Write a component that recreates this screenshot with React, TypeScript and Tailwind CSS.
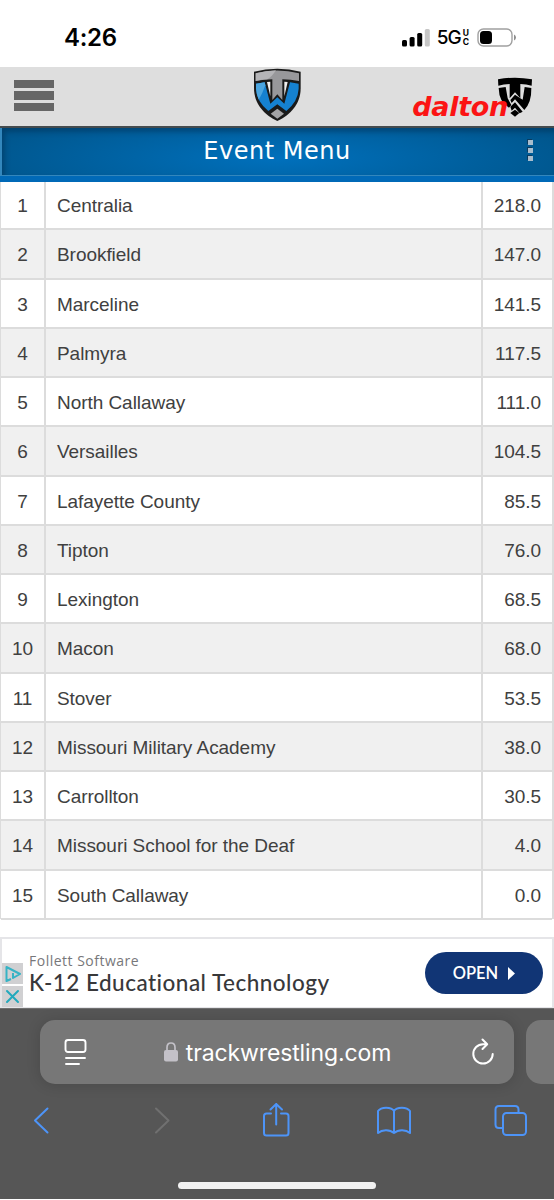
import type { ReactNode } from 'react'

type Team = { name: string; score: string }

const TEAMS: Team[] = [
  { name: 'Centralia', score: '218.0' },
  { name: 'Brookfield', score: '147.0' },
  { name: 'Marceline', score: '141.5' },
  { name: 'Palmyra', score: '117.5' },
  { name: 'North Callaway', score: '111.0' },
  { name: 'Versailles', score: '104.5' },
  { name: 'Lafayette County', score: '85.5' },
  { name: 'Tipton', score: '76.0' },
  { name: 'Lexington', score: '68.5' },
  { name: 'Macon', score: '68.0' },
  { name: 'Stover', score: '53.5' },
  { name: 'Missouri Military Academy', score: '38.0' },
  { name: 'Carrollton', score: '30.5' },
  { name: 'Missouri School for the Deaf', score: '4.0' },
  { name: 'South Callaway', score: '0.0' },
]

function StatusBar() {
  return (
    <div className="flex h-[67px] items-start justify-between bg-white pl-16 pr-[37px] pt-[23px] text-black">
      <span className="font-[Inter,sans-serif] text-[24px] font-semibold leading-[29px] tracking-[-0.3px]">4:26</span>
      <div className="flex h-[29px] items-center">
        <svg className="mr-[7px]" width="28" height="18" viewBox="0 0 28 18">
          <rect x="0" y="11" width="5" height="6.5" rx="1.5" />
          <rect x="7.6" y="8" width="5" height="9.5" rx="1.5" />
          <rect x="15.2" y="4" width="5" height="13.5" rx="1.5" />
          <rect x="22.8" y="0" width="5" height="17.5" rx="1.5" fill="#c6c6c6" />
        </svg>
        <span className="font-[Inter,sans-serif] text-[19px] font-medium leading-none tracking-[-1px]">5G</span>
        <span className="ml-[2px] flex flex-col font-[Inter,sans-serif] text-[8.5px] font-bold leading-[9px]">
          <span>U</span>
          <span>C</span>
        </span>
        <svg className="ml-[8px]" width="40" height="19" viewBox="0 0 40 19">
          <rect x="1" y="1" width="34" height="17" rx="5.5" fill="none" stroke="#a0a0a0" strokeWidth="1.4" />
          <rect x="3" y="3" width="12" height="13" rx="3.5" />
          <path d="M37 6.5q2 1 2 3t-2 3z" fill="#8e8e8e" />
        </svg>
      </div>
    </div>
  )
}

function ShieldLogo() {
  return (
    <svg width="49" height="54" viewBox="39 24 147 162">
      <path d="M42 35Q76 26 112 26T182 35V84C182 132 152 164 112 183C72 164 42 132 42 84Z" fill="#1a1a1a" />
      <path d="M47 40Q112 23 177 40V63Q152 59 127 58V120L112 103L97 120V58Q72 59 47 63Z" fill="#98989b" />
      <path d="M47 40Q76 32 108 31Q96 50 82 58Q64 59 47 63Z" fill="#b4b4b7" />
      <path d="M81 66L91 65V109ZM133 65L143 66L133 109Z" fill="#eee" />
      <path d="M48 71L74 67L91 131L112 112L133 131L150 67L176 71V86Q174 124 139 153L112 133L85 153Q50 124 48 86Z" fill="#1581d0" />
      <path d="M48 71L74 67L76 76Q68 100 56 119Q49 102 48 86Z" fill="#4ba5df" />
      <path d="M112 146L132 161L112 176L92 161Z" fill="#a3a3a5" />
    </svg>
  )
}

function SponsorMark() {
  return (
    <svg width="36" height="40" viewBox="0 0 108 120">
      <path d="M3 7Q54-3 105 7L104 26Q88 22 70 21V64L54 46L38 64V21Q20 22 4 26Z" />
      <path d="M5 33L26 30L32 64L43 84L36 92Q6 76 5 33Z" />
      <path d="M103 33L83 30L77 68L54 53L40 69L44 78L54 67L82 99Q104 76 103 33Z" />
      <path d="M40 89L54 76L77 104L68 109L54 92L44 101Z" />
      <path d="M54 98L67 108L54 119L40 108Z" />
    </svg>
  )
}

function SiteHeader() {
  return (
    <header className="relative flex h-[61px] items-center justify-between border-b-2 border-[#444b4e] bg-[#dedede] pl-3.5 pr-[21px]">
      <div className="flex flex-col gap-[3px] pb-0.5">
        <span className="h-[8.5px] w-10 bg-[#666]" />
        <span className="h-[8.5px] w-10 bg-[#666]" />
        <span className="h-[8.5px] w-10 bg-[#666]" />
      </div>
      <div className="absolute left-[253px] top-px">
        <ShieldLogo />
      </div>
      <div className="relative flex h-full items-start">
        <span className="relative z-10 -mr-[11px] mt-[25px] font-['DejaVu_Sans',sans-serif] text-[27px] font-bold italic leading-[30px] tracking-[-0.3px] text-[#fb1414]">
          dalton
        </span>
        <span className="mt-[10px]">
          <SponsorMark />
        </span>
      </div>
    </header>
  )
}

function EventMenu() {
  return (
    <div className="relative h-[54px] border-b-[6px] border-[#0069b7] bg-[#0069b0]">
      <div className="flex h-12 items-center justify-center border-b border-l-2 border-[#3387bd] bg-radial-[ellipse_60%_120%_at_50%_65%] from-[#0070bc] to-[#005489] shadow-[inset_3px_4px_5px_rgba(0,45,80,0.45)]">
        <h1 className="pb-0.5 pr-0.5 font-['DejaVu_Sans',sans-serif] text-[24px] leading-none tracking-[0.5px] text-white">Event Menu</h1>
      </div>
      <div className="absolute right-[21px] top-3 flex flex-col gap-[3px]">
        <span className="size-[5px] bg-[#a9bdcd] shadow-[-1px_-1px_0_#0a3c61]" />
        <span className="size-[5px] bg-[#a9bdcd] shadow-[-1px_-1px_0_#0a3c61]" />
        <span className="size-[5px] bg-[#a9bdcd] shadow-[-1px_-1px_0_#0a3c61]" />
      </div>
    </div>
  )
}

function Row({ rank, team }: { rank: number; team: Team }) {
  return (
    <div className="grid h-[49.27px] grid-cols-[43px_437px_1fr] border-b-2 border-[#dcdcdc] leading-[49px] odd:bg-white even:bg-[#f0f0f0]">
      <span className="text-center">{rank}</span>
      <span className="border-l-2 border-[#dcdcdc] pl-[11px]">{team.name}</span>
      <span className="border-l-2 border-[#dcdcdc] pr-[11px] text-right">{team.score}</span>
    </div>
  )
}

function Standings() {
  return (
    <div className="h-[738px] border-l border-r-2 border-[#dcdcdc] font-['Liberation_Sans',Arial,sans-serif] text-[19px] tracking-[-0.05px] text-[#404040]">
      <div className="-mt-[1px]">
        {TEAMS.map((team, i) => (
          <Row key={team.name} rank={i + 1} team={team} />
        ))}
      </div>
    </div>
  )
}

function AdBanner() {
  return (
    <section className="relative mt-[18px] flex h-[71px] justify-between border-2 border-b border-[#e5e5e8] bg-white pl-[27px] pr-[9px]">
      <div className="pt-[13px]">
        <p className="font-['Open_Sans',sans-serif] text-[14px] leading-[18px] tracking-[0.5px] text-[#77777a]">Follett Software</p>
        <h2 className="-mt-px font-[Lato,sans-serif] text-[22.5px] font-medium leading-[28px] tracking-[0.48px] text-[#38383a]">
          K-12 Educational Technology
        </h2>
      </div>
      <button className="mt-[13px] flex h-[42px] w-[118px] items-center justify-center gap-[10px] rounded-full bg-[#113575] text-white">
        <span className="font-[Lato,sans-serif] text-[16.5px] font-semibold">OPEN</span>
        <svg width="7" height="13" viewBox="0 0 7 12" preserveAspectRatio="none">
          <path d="M0 0L7 6L0 12Z" fill="#fff" />
        </svg>
      </button>
      <div className="absolute left-0 top-6 flex flex-col gap-0.5">
        <span className="bg-[#d0d0d2]">
          <svg width="21" height="21" viewBox="0 0 21 21" fill="none" stroke="#36b3c5" strokeWidth="2" strokeLinejoin="round">
            <path d="M9 16L4.500 18V4L18 11L11 15V10M11 6.500V8.500" />
          </svg>
        </span>
        <span className="bg-[#d0d0d2]">
          <svg width="21" height="21" viewBox="0 0 21 21" stroke="#21a9bd" strokeWidth="2" strokeLinecap="round">
            <path d="M5 5L16 16M16 5L5 16" />
          </svg>
        </span>
      </div>
    </section>
  )
}

function ToolIcon({ children, className = '' }: { children: ReactNode; className?: string }) {
  return (
    <svg
      className={className}
      width="36"
      height="40"
      viewBox="0 0 36 40"
      fill="none"
      stroke="currentColor"
      strokeWidth="2"
      strokeLinecap="round"
      strokeLinejoin="round"
    >
      {children}
    </svg>
  )
}

function BrowserBar() {
  return (
    <footer className="h-[191px] overflow-hidden border-t border-[#707070] bg-[#565656] pt-[11px]">
      <div className="flex gap-3 pl-10">
        <div className="flex h-16 w-[474px] shrink-0 items-center justify-between rounded-[15px] bg-[#777] pl-[24px] pr-[19px] text-white shadow-[0_1px_14px_rgba(0,0,0,0.15)]">
          <svg width="24" height="28" viewBox="0 0 24 28" fill="none" stroke="currentColor" strokeWidth="1.9" strokeLinecap="round">
            <rect x="1.500" y="2" width="20" height="12" rx="2.500" />
            <path d="M2 20H21M2 26H15" />
          </svg>
          <div className="flex items-center gap-2 pr-1">
            <svg width="14" height="20" viewBox="0 0 14 20">
              <rect x="0" y="8" width="14" height="11.5" rx="2" fill="#c3c1c8" />
              <path d="M3 9V5.5Q3 1 7 1T11 5.5V9" fill="none" stroke="#c3c1c8" strokeWidth="1.7" />
            </svg>
            <span className="pt-0.5 font-[Inter,sans-serif] text-[23px] leading-none tracking-[-0.12px]">trackwrestling.com</span>
          </div>
          <svg width="24" height="28" viewBox="0 0 24 28" fill="none" stroke="currentColor" strokeWidth="2" strokeLinecap="round" strokeLinejoin="round">
            <path d="M15.500 6.200H12A9.700 9.700 0 1 0 21.700 15.900M11.500 1.500L16.200 6.200L11.500 11" />
          </svg>
        </div>
        <div className="h-16 w-16 shrink-0 rounded-[15px] bg-[#777]" />
      </div>
      <div className="flex justify-between pl-[23px] pr-[25px] pt-4 text-[#4d94f8]">
        <ToolIcon>
          <path d="M24.500 8.500L12 20.500L24.500 32.500" />
        </ToolIcon>
        <ToolIcon className="text-[#707070]">
          <path d="M15 8.500L27.500 20.500L15 32.500" />
        </ToolIcon>
        <ToolIcon>
          <path d="M13 13.500H8.500Q6 13.500 6 16V33Q6 35.500 8.500 35.500H28Q30.500 35.500 30.500 33V16Q30.500 13.500 28 13.500H23M18.200 24.500V4M12.500 9.500L18.200 4L24 9.500" />
        </ToolIcon>
        <ToolIcon>
          <path d="M18 11C15.500 6.500 5 6.500 2 11V33C6 29.500 13.500 29 18 33C22.500 29 30 29.500 34 33V11C31 6.500 20.500 6.500 18 11V33" />
        </ToolIcon>
        <ToolIcon>
          <path d="M10 28H6Q2.500 28 2.500 24.500V9.500Q2.500 6 6 6H22Q25.500 6 25.500 9.500V13" />
          <rect x="10" y="13" width="23" height="22" rx="3.500" />
        </ToolIcon>
      </div>
      <div className="mx-auto mt-[42px] h-[7px] w-[198px] rounded-full bg-[#f2f2f2]" />
    </footer>
  )
}

export default function App() {
  return (
    <main className="h-[1200px] w-[554px] overflow-hidden bg-white">
      <StatusBar />
      <SiteHeader />
      <EventMenu />
      <Standings />
      <AdBanner />
      <BrowserBar />
    </main>
  )
}
